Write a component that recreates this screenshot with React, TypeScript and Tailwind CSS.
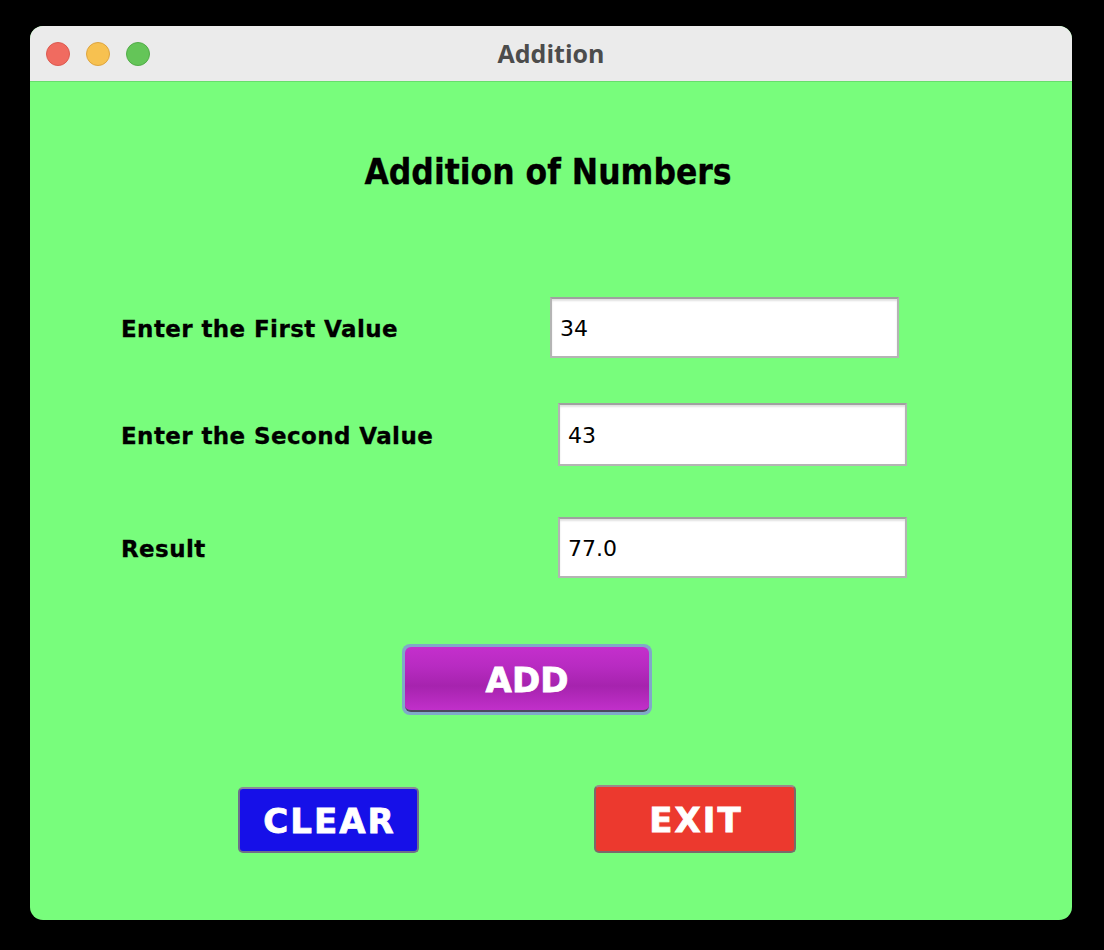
import React from "react";

export default function App() {
  const field =
    "h-[61px] w-[349px] bg-white border-2 border-[#b4b4b4] border-t-[#a0a0a0] shadow-[inset_0_2px_2px_rgba(0,0,0,0.12)] flex items-center pl-[8px] pt-[2px] text-[22px] text-black [font-family:'DejaVu_Sans',sans-serif]";
  const label = "text-[23px] font-bold text-black [font-family:'DejaVu_Sans',sans-serif] tracking-[0.4px] pt-[3px] [-webkit-text-stroke:0.3px_black]";
  const btnText = "text-white text-[34px] font-bold [font-family:'DejaVu_Sans',sans-serif] [-webkit-text-stroke:0.8px_white]";
  return (
    <div className="w-[1104px] h-[950px] bg-black pt-[26px] pl-[30px]">
      <div className="w-[1042px] h-[894px] rounded-[13px] overflow-hidden flex flex-col bg-[#78fd7c]">
        <div className="h-[56px] bg-[#ebebeb] border-b border-[#66de6b] flex items-center relative shrink-0">
          <div className="flex gap-[16px] pl-[16px]">
            <div className="w-[24px] h-[24px] rounded-full bg-[#f06b60] border border-[#dc5a50]" />
            <div className="w-[24px] h-[24px] rounded-full bg-[#f7c150] border border-[#dea540]" />
            <div className="w-[24px] h-[24px] rounded-full bg-[#64c558] border border-[#52ac48]" />
          </div>
          <div className="absolute inset-0 flex items-center justify-center text-[25px] font-bold text-[#4c4c4c] [font-family:'Open_Sans',sans-serif] pointer-events-none">
            Addition
          </div>
        </div>
        <div className="flex-1 flex flex-col relative">
          <div className="mt-[70px] flex justify-center pr-[6px]">
            <div className="text-[35px] font-bold text-black [font-family:'DejaVu_Sans_Condensed','DejaVu_Sans',sans-serif] leading-[40px] [-webkit-text-stroke:0.3px_black]">
              Addition of Numbers
            </div>
          </div>
          <div className="mt-[105px] flex items-center pl-[91px]">
            <div className={label + " w-[429px]"}>Enter the First Value</div>
            <div className={field}>34</div>
          </div>
          <div className="mt-[45px] flex items-center pl-[91px]">
            <div className={label + " w-[437px]"}>Enter the Second Value</div>
            <div className={field + " h-[63px]"}>43</div>
          </div>
          <div className="mt-[51px] flex items-center pl-[91px]">
            <div className={label + " w-[437px]"}>Result</div>
            <div className={field}>77.0</div>
          </div>
          <div className="mt-[66px] pl-[372px]">
            <div className="w-[250px] h-[71px] rounded-[8px] bg-[#80a9c8] p-[3px]">
              <div className={"w-full h-full rounded-[6px] border-b-2 border-[#4a4a5a] bg-[linear-gradient(to_bottom,#c42fcc_0%,#b82bc2_30%,#a623ae_62%,#c12fca_100%)] flex items-center justify-center pt-[4px] " + btnText}>
                ADD
              </div>
            </div>
          </div>
          <div className="mt-[70px] flex items-start">
            <div className={"ml-[208px] mt-[2px] w-[181px] h-[66px] rounded-[5px] bg-[#1610e8] border-2 border-[#6f6f8a] border-t-[#8a8a9a] flex items-center justify-center tracking-[2px] pl-[2px] pt-[3px] " + btnText}>
              CLEAR
            </div>
            <div className={"ml-[175px] w-[202px] h-[68px] rounded-[5px] bg-[#ec392e] border-2 border-[#7a6a6a] border-t-[#9a8a8a] flex items-center justify-center tracking-[2px] pl-[2px] pt-[3px] " + btnText}>
              EXIT
            </div>
          </div>
        </div>
      </div>
    </div>
  );
}
